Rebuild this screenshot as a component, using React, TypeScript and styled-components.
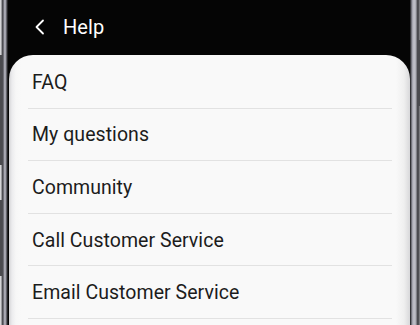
import React from "react";
import styled, { createGlobalStyle } from "styled-components";

const Global = createGlobalStyle`
  html, body { margin: 0; padding: 0; background: #000; }
  body { width: 420px; height: 325px; overflow: hidden; font-family: Roboto, "Noto Sans", sans-serif; }
`;

const Phone = styled.div`
  display: flex;
  width: 420px;
  height: 325px;
  overflow: hidden;
`;

const LeftBezel = styled.div`
  width: 8px;
  flex: none;
  background: linear-gradient(
    to right,
    #c9c9cc 0px,
    #e2e2e4 1px,
    #55555a 2px,
    #45454a 3px,
    #9a9aa4 4px,
    #b6b6c0 5px,
    #8d8d96 6px,
    #3a3a3e 7px,
    #111 8px
  );
  position: relative;
`;

const RightBezel = styled.div`
  width: 10px;
  flex: none;
  background: linear-gradient(
    to right,
    #1b1b1d 0px,
    #4a4a50 1px,
    #9a9aa4 2px,
    #c4c4cc 4px,
    #a8a8b0 6px,
    #5b5b60 7px,
    #3a3a3e 8px,
    #8e8e92 10px
  );
  position: relative;
`;

const SideButton = styled.div<{ $top: number; $height: number; $side: "left" | "right" }>`
  position: absolute;
  top: ${(p) => p.$top}px;
  height: ${(p) => p.$height}px;
  ${(p) => (p.$side === "left" ? "left: 0;" : "right: 0;")}
  width: 2px;
  background: #4a4a4e;
`;

const Screen = styled.div`
  flex: 1;
  display: flex;
  flex-direction: column;
  background: #050505;
  min-width: 0;
`;

const Header = styled.div`
  height: 55px;
  flex: none;
  display: flex;
  align-items: center;
  padding-left: 26px;
  gap: 17px;
  box-sizing: border-box;
  padding-bottom: 2px;
`;

const BackIcon = styled.svg`
  width: 12px;
  height: 16px;
  flex: none;
`;

const Title = styled.div`
  color: #fff;
  font-size: 20px;
  font-weight: 400;
  letter-spacing: 0.1px;
`;

const Card = styled.div`
  flex: 1;
  margin-left: 1px;
  border-radius: 24px 24px 0 0;
  background:
    linear-gradient(to right, #d4d4d6 0px, #ececee 3px, #f7f7f7 7px, #f9f9f9 12px, #f9f9f9 calc(100% - 14px), #efefef calc(100% - 6px), #d8d8da 100%);
  padding-top: 1px;
  display: flex;
  flex-direction: column;
`;

const Row = styled.div`
  height: 52.6px;
  flex: none;
  margin: 0 18px 0 19px;
  padding-left: 4px;
  display: flex;
  align-items: center;
  box-sizing: border-box;
  border-bottom: 1px solid #e2e2e2;
  color: #1c1c1c;
  font-size: 19.5px;
  letter-spacing: 0.05px;
  padding-top: 1px;
`;

const items = ["FAQ", "My questions", "Community", "Call Customer Service", "Email Customer Service"];

export default function App() {
  return (
    <>
      <Global />
      <Phone>
        <LeftBezel>
          <SideButton $side="left" $top={55} $height={110} />
          <SideButton $side="left" $top={200} $height={76} />
        </LeftBezel>
        <Screen>
          <Header>
            <BackIcon viewBox="0 0 12 16">
              <path d="M9 1.5 L2.5 8 L9 14.5" fill="none" stroke="#fff" strokeWidth="1.8" strokeLinecap="round" strokeLinejoin="round" />
            </BackIcon>
            <Title>Help</Title>
          </Header>
          <Card>
            {items.map((t) => (
              <Row key={t}>{t}</Row>
            ))}
          </Card>
        </Screen>
        <RightBezel>
          <SideButton $side="right" $top={40} $height={66} />
        </RightBezel>
      </Phone>
    </>
  );
}
